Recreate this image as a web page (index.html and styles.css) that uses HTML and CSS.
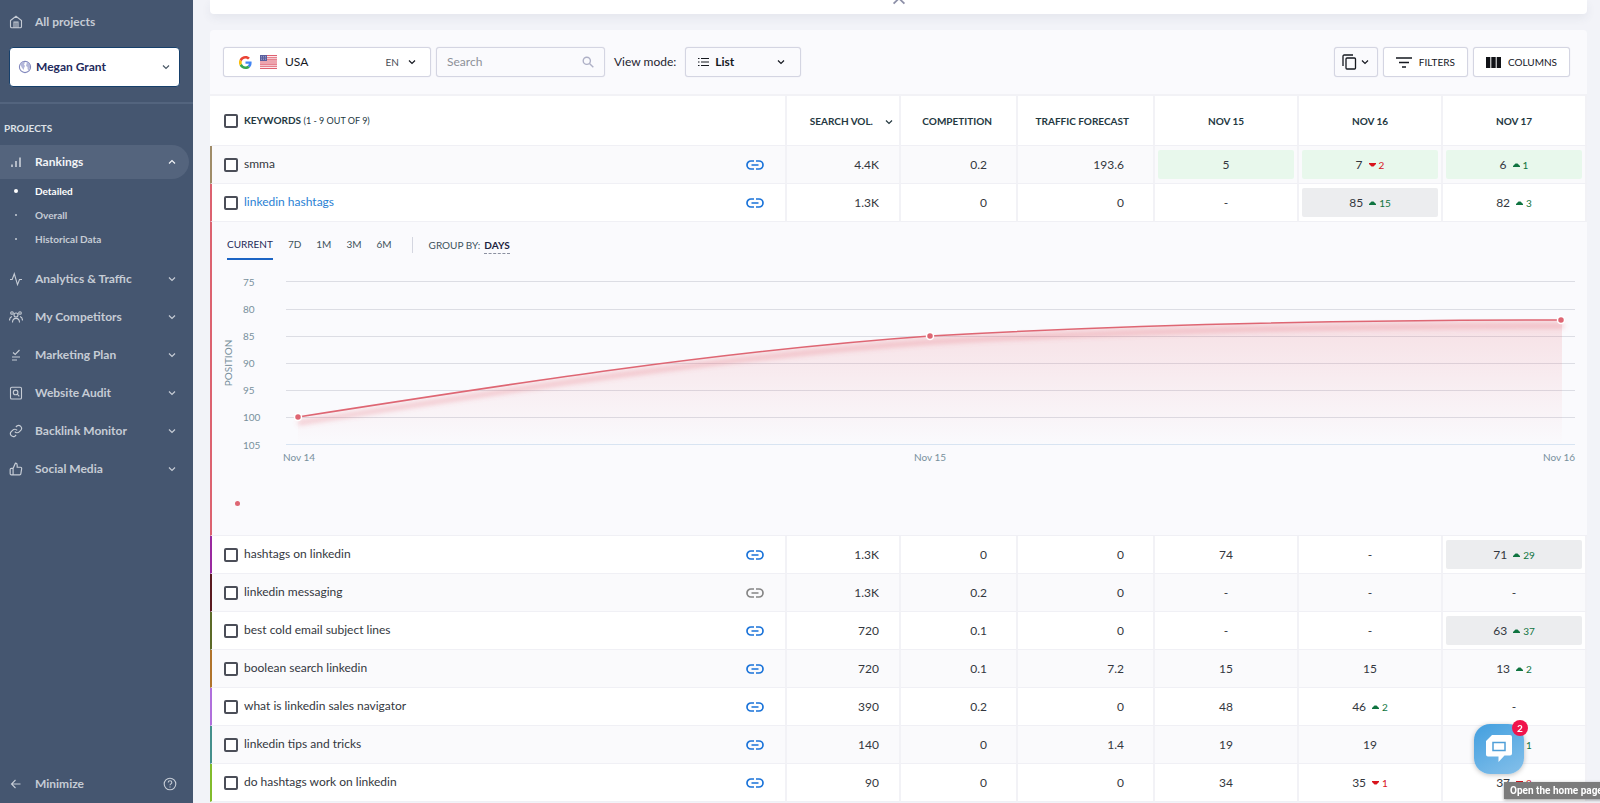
FILE: index.html
```html
<!DOCTYPE html>
<html lang="en">
<head>
    <meta charset="UTF-8">
    <meta name="viewport" content="width=device-width, initial-scale=1.0">
    <title>Rankings - Detailed</title>
    <link rel="stylesheet" href="styles.css">
</head>
<body>
    <!-- Shared icons -->
    <svg class="sprite" aria-hidden="true">
        <symbol id="chevron" viewBox="0 0 10 10"><path d="M2 3.5l3 3 3-3"/></symbol>
        <symbol id="chevron-up" viewBox="0 0 10 10"><path d="M2 6.5l3-3 3 3"/></symbol>
        <symbol id="link" viewBox="0 0 18 10"><path d="M8 1H5a4 4 0 0 0 0 8h3M10 1h3a4 4 0 0 1 0 8h-3M5.5 5h7"/></symbol>
        <symbol id="up" viewBox="0 0 7 4"><path d="M0 4V3L2.500.5h2L7 3v1z"/></symbol>
        <symbol id="down" viewBox="0 0 7 4"><path d="M0 0v1l2.500 2.500h2L7 1V0z"/></symbol>
    </svg>

    <!-- Sidebar -->
    <aside class="sidebar">
        <a href="#" class="nav-link all-projects">
            <svg class="icon" viewBox="0 0 14 14"><path d="M1.500 5.500L7 1.200l5.500 4.300v6a1.300 1.300 0 0 1-1.300 1.300H2.800a1.300 1.300 0 0 1-1.300-1.300zM5 12.500V7h4v5.500M7 7v5.500"/></svg>
            <span>All projects</span>
        </a>
        <label class="project-picker">
            <svg class="icon globe" viewBox="0 0 14 14"><circle cx="7" cy="7" r="5.600"/><path class="land" d="M2 4l3-2.500 2 1-1 2 1 1.500-1 2 0 2-2-2-1-2zM9 2l3 3v3l-1.500 2.500-1-1.500 0-2-1.500-1 .5-2z"/></svg>
            <select aria-label="Project"><option>Megan Grant</option></select>
            <svg class="chev"><use href="#chevron"/></svg>
        </label>
        <h2 class="sidebar-title">PROJECTS</h2>
        <nav>
            <a href="#" class="nav-link active">
                <svg class="icon bars" viewBox="0 0 14 14"><path d="M3 9.500V12M7 6v6M11 2.500V12"/></svg>
                <span>Rankings</span>
                <svg class="chev"><use href="#chevron-up"/></svg>
            </a>
            <ul class="sub-nav">
                <li class="current"><a href="#">Detailed</a></li>
                <li><a href="#">Overall</a></li>
                <li><a href="#">Historical Data</a></li>
            </ul>
            <a href="#" class="nav-link">
                <svg class="icon" viewBox="0 0 14 14"><path d="M1 7.500h2.200L5.300 1.800l3.200 10.800 2-5.100H13"/></svg>
                <span>Analytics &amp; Traffic</span>
                <svg class="chev"><use href="#chevron"/></svg>
            </a>
            <a href="#" class="nav-link">
                <svg class="icon" viewBox="0 0 14 14"><circle cx="7" cy="5" r="2"/><path d="M3.500 12.500c0-5.500 7-5.500 7 0M.5 10.500c0-2 .8-3.500 2.500-4M13.500 10.500c0-2-.8-3.500-2.500-4"/><circle cx="3" cy="3" r="1.300"/><circle cx="11" cy="3" r="1.300"/></svg>
                <span>My Competitors</span>
                <svg class="chev"><use href="#chevron"/></svg>
            </a>
            <a href="#" class="nav-link">
                <svg class="icon" viewBox="0 0 14 14"><path d="M4 4.500l2.200 2L10.500 2M3 9h8M3 12h5"/></svg>
                <span>Marketing Plan</span>
                <svg class="chev"><use href="#chevron"/></svg>
            </a>
            <a href="#" class="nav-link">
                <svg class="icon" viewBox="0 0 14 14"><rect x="1.500" y="1.200" width="11" height="11.800" rx="1.300"/><circle cx="6.600" cy="6.400" r="2.300"/><path d="M8.300 8.200l2 2.200"/></svg>
                <span>Website Audit</span>
                <svg class="chev"><use href="#chevron"/></svg>
            </a>
            <a href="#" class="nav-link">
                <svg class="icon" viewBox="0 0 24 24"><path class="feather" d="M10 13a5 5 0 0 0 7.500.5l3-3a5 5 0 0 0-7-7l-1.700 1.700M14 11a5 5 0 0 0-7.500-.5l-3 3a5 5 0 0 0 7 7l1.700-1.700"/></svg>
                <span>Backlink Monitor</span>
                <svg class="chev"><use href="#chevron"/></svg>
            </a>
            <a href="#" class="nav-link">
                <svg class="icon" viewBox="0 0 24 24"><path class="feather" d="M14 9V5a3 3 0 0 0-3-3l-4 9v11h11.300a2 2 0 0 0 2-1.700l1.400-9a2 2 0 0 0-2-2.300zM7 22H4a2 2 0 0 1-2-2v-7a2 2 0 0 1 2-2h3"/></svg>
                <span>Social Media</span>
                <svg class="chev"><use href="#chevron"/></svg>
            </a>
        </nav>
        <div class="sidebar-footer">
            <button type="button" class="minimize">
                <svg class="icon" viewBox="0 0 14 14"><path d="M11.500 7H2.500M6.500 3l-4 4 4 4"/></svg>
                <span>Minimize</span>
            </button>
            <a href="#" class="help" aria-label="Help">
                <svg class="icon" viewBox="0 0 14 14"><circle cx="7" cy="7" r="5.800"/><path d="M5.200 5.500c0-2.300 3.600-2.300 3.600 0 0 1.400-1.800 1.300-1.800 2.700M7 9.600v1"/></svg>
            </a>
        </div>
    </aside>

    <main class="content">
        <section class="summary-card">
            <button type="button" class="collapse" aria-label="Collapse"><svg class="chev"><use href="#chevron-up"/></svg></button>
        </section>

        <section class="panel">
            <!-- Toolbar -->
            <div class="toolbar">
                <label class="control country">
                    <svg class="google" viewBox="0 0 48 48"><path fill="#4285f4" d="M46.500 24.500c0-1.600-.1-3.100-.4-4.500H24v9h12.700c-.6 3-2.300 5.500-4.800 7.200l7.700 6c4.500-4.200 6.900-10.300 6.900-17.700z"/><path fill="#34a853" d="M24 48c6.500 0 11.900-2.100 15.900-5.800l-7.700-6c-2.200 1.400-4.900 2.300-8.200 2.300-6.300 0-11.600-4.200-13.500-9.900l-8 6.200C6.500 42.600 14.600 48 24 48z"/><path fill="#fbbc05" d="M10.500 28.600c-1-3-1-6.200 0-9.200l-8-6.200a24 24 0 0 0 0 21.600z"/><path fill="#ea4335" d="M24 9.500c3.500 0 6.700 1.200 9.200 3.600l6.900-6.900C35.900 2.400 30.500 0 24 0 14.600 0 6.500 5.400 2.500 13.200l8 6.200C12.400 13.700 17.700 9.500 24 9.500z"/></svg>
                    <svg class="flag" viewBox="0 0 17 14"><path fill="#fbe9ec" d="M0 0h17v14H0z"/><path stroke="#df6070" stroke-width="1.100" d="M0 .5h17M0 2.700h17M0 4.900h17M0 7h17M0 9.100h17M0 11.300h17M0 13.500h17"/><path fill="#5a5f9e" d="M0 0h7v6H0z"/><path stroke="#a9acd0" stroke-dasharray="1 1" stroke-width=".7" d="M1 1.500h5M1 3h5M1 4.500h5"/></svg>
                    <select aria-label="Search engine country"><option>USA</option></select>
                    <span class="lang">EN</span>
                    <svg class="chev"><use href="#chevron"/></svg>
                </label>
                <label class="control search">
                    <input type="text" placeholder="Search" aria-label="Search">
                    <svg class="magnifier" viewBox="0 0 12 12"><circle cx="4.800" cy="4.800" r="3.600"/><path d="M7.500 7.500l3.800 3.800"/></svg>
                </label>
                <label class="view-label" for="viewMode">View mode:</label>
                <div class="control view">
                    <svg class="list-icon" viewBox="0 0 11 10"><path d="M3 1.500h8M3 5h8M3 8.500h8M0 1.500h1.500M0 5h1.500M0 8.500h1.500"/></svg>
                    <select id="viewMode"><option>List</option></select>
                    <svg class="chev"><use href="#chevron"/></svg>
                </div>
                <button type="button" class="control copy" aria-label="Copy">
                    <svg class="copy-icon" viewBox="0 0 15 16"><path d="M1 12V2.200C1 1.500 1.500 1 2.200 1H11"/><rect x="4" y="4" width="9.500" height="11" rx="1"/></svg>
                    <svg class="chev"><use href="#chevron"/></svg>
                </button>
                <button type="button" class="control">
                    <svg class="filter-icon" viewBox="0 0 16 11"><path d="M0 1h16M3 5.500h10M6 10h4"/></svg>
                    FILTERS
                </button>
                <button type="button" class="control">
                    <svg class="columns-icon" viewBox="0 0 15 11"><path d="M0 0h4.300v11H0zM5.300 0h4.400v11H5.300zM10.700 0H15v11h-4.300z"/></svg>
                    COLUMNS
                </button>
            </div>

            <!-- Keyword table -->
            <table class="keywords">
                <colgroup>
                    <col>
                    <col class="col-volume">
                    <col class="col-competition">
                    <col class="col-traffic">
                    <col class="col-day">
                    <col class="col-day">
                    <col class="col-day">
                </colgroup>
                <thead>
                    <tr>
                        <th class="kw"><label class="kw-cell"><input type="checkbox"><span>KEYWORDS <span class="count">(1 - 9 OUT OF 9)</span></span></label></th>
                        <th class="volume sorted">SEARCH VOL.<svg class="chev"><use href="#chevron"/></svg></th>
                        <th>COMPETITION</th>
                        <th>TRAFFIC FORECAST</th>
                        <th class="day">NOV 15</th>
                        <th class="day">NOV 16</th>
                        <th class="day">NOV 17</th>
                    </tr>
                </thead>
                <tbody>
                    <tr class="alt">
                        <td class="kw tan"><div class="kw-cell"><input type="checkbox" id="kw1"><label for="kw1">smma</label><a href="#" aria-label="Open page"><svg class="link"><use href="#link"/></svg></a></div></td>
                        <td class="volume">4.4K</td><td>0.2</td><td>193.6</td>
                        <td class="day"><div class="pos top10">5</div></td>
                        <td class="day"><div class="pos top10">7<span class="down"><svg><use href="#down"/></svg>2</span></div></td>
                        <td class="day"><div class="pos top10">6<span class="up"><svg><use href="#up"/></svg>1</span></div></td>
                    </tr>
                    <tr>
                        <td class="kw rose"><div class="kw-cell"><input type="checkbox" id="kw2"><label for="kw2" class="selected">linkedin hashtags</label><a href="#" aria-label="Open page"><svg class="link"><use href="#link"/></svg></a></div></td>
                        <td class="volume">1.3K</td><td>0</td><td>0</td>
                        <td class="day"><div class="pos">-</div></td>
                        <td class="day"><div class="pos moved">85<span class="up"><svg><use href="#up"/></svg>15</span></div></td>
                        <td class="day"><div class="pos">82<span class="up"><svg><use href="#up"/></svg>3</span></div></td>
                    </tr>
                    <tr class="details">
                        <td class="kw rose" colspan="7">
                            <div class="tabs">
                                <button type="button" class="tab active">CURRENT</button>
                                <button type="button" class="tab">7D</button>
                                <button type="button" class="tab">1M</button>
                                <button type="button" class="tab">3M</button>
                                <button type="button" class="tab">6M</button>
                                <div class="group-by">GROUP BY: <button type="button">DAYS</button></div>
                            </div>
                            <svg class="chart" viewBox="0 0 1365 215">
                                <defs>
                                    <linearGradient id="fill" x1="0" y1="60" x2="0" y2="185" gradientUnits="userSpaceOnUse">
                                        <stop offset="0" stop-color="#e4606d" stop-opacity=".17"/>
                                        <stop offset="1" stop-color="#e4606d" stop-opacity="0"/>
                                    </linearGradient>
                                    <filter id="soft" x="-5%" y="-20%" width="110%" height="150%"><feGaussianBlur stdDeviation="2.500"/></filter>
                                </defs>
                                <g class="grid">
                                    <path d="M64 21.500h1289M64 49.500h1289M64 76.500h1289M64 103.500h1289M64 130.500h1289M64 157.500h1289"/>
                                    <path class="base" d="M64 184.500h1289"/>
                                </g>
                                <path class="area" fill="url(#fill)" d="M76 157C287 124 498 91 708 76 918 64 1129 60 1340 60V184H76z"/>
                                <path class="line-shadow" filter="url(#soft)" d="M76 163C287 130 498 97 708 82 918 70 1129 66 1342 66"/>
                                <path class="line" d="M76 157C287 124 498 91 708 76 918 64 1129 60 1340 60"/>
                                <g class="points">
                                    <circle cx="76" cy="157" r="3.500"/>
                                    <circle cx="708" cy="76" r="3.500"/>
                                    <circle cx="1339" cy="60" r="3.500"/>
                                </g>
                                <g class="labels">
                                    <text x="21" y="26">75</text>
                                    <text x="21" y="53">80</text>
                                    <text x="21" y="80">85</text>
                                    <text x="21" y="107">90</text>
                                    <text x="21" y="134">95</text>
                                    <text x="21" y="161">100</text>
                                    <text x="21" y="189">105</text>
                                    <text x="61" y="201">Nov 14</text>
                                    <text x="708" y="201" text-anchor="middle">Nov 15</text>
                                    <text x="1353" y="201" text-anchor="end">Nov 16</text>
                                    <text x="10" y="103" text-anchor="middle" transform="rotate(-90 10 103)">POSITION</text>
                                </g>
                            </svg>
                            <div class="legend"><span class="dot"></span></div>
                        </td>
                    </tr>
                    <tr>
                        <td class="kw purple"><div class="kw-cell"><input type="checkbox" id="kw3"><label for="kw3">hashtags on linkedin</label><a href="#" aria-label="Open page"><svg class="link"><use href="#link"/></svg></a></div></td>
                        <td class="volume">1.3K</td><td>0</td><td>0</td>
                        <td class="day"><div class="pos">74</div></td>
                        <td class="day"><div class="pos">-</div></td>
                        <td class="day"><div class="pos moved">71<span class="up"><svg><use href="#up"/></svg>29</span></div></td>
                    </tr>
                    <tr class="alt">
                        <td class="kw maroon"><div class="kw-cell"><input type="checkbox" id="kw4"><label for="kw4">linkedin messaging</label><a href="#" aria-label="Open page"><svg class="link muted"><use href="#link"/></svg></a></div></td>
                        <td class="volume">1.3K</td><td>0.2</td><td>0</td>
                        <td class="day"><div class="pos">-</div></td>
                        <td class="day"><div class="pos">-</div></td>
                        <td class="day"><div class="pos">-</div></td>
                    </tr>
                    <tr>
                        <td class="kw olive"><div class="kw-cell"><input type="checkbox" id="kw5"><label for="kw5">best cold email subject lines</label><a href="#" aria-label="Open page"><svg class="link"><use href="#link"/></svg></a></div></td>
                        <td class="volume">720</td><td>0.1</td><td>0</td>
                        <td class="day"><div class="pos">-</div></td>
                        <td class="day"><div class="pos">-</div></td>
                        <td class="day"><div class="pos moved">63<span class="up"><svg><use href="#up"/></svg>37</span></div></td>
                    </tr>
                    <tr class="alt">
                        <td class="kw brown"><div class="kw-cell"><input type="checkbox" id="kw6"><label for="kw6">boolean search linkedin</label><a href="#" aria-label="Open page"><svg class="link"><use href="#link"/></svg></a></div></td>
                        <td class="volume">720</td><td>0.1</td><td>7.2</td>
                        <td class="day"><div class="pos">15</div></td>
                        <td class="day"><div class="pos">15</div></td>
                        <td class="day"><div class="pos">13<span class="up"><svg><use href="#up"/></svg>2</span></div></td>
                    </tr>
                    <tr>
                        <td class="kw violet"><div class="kw-cell"><input type="checkbox" id="kw7"><label for="kw7">what is linkedin sales navigator</label><a href="#" aria-label="Open page"><svg class="link"><use href="#link"/></svg></a></div></td>
                        <td class="volume">390</td><td>0.2</td><td>0</td>
                        <td class="day"><div class="pos">48</div></td>
                        <td class="day"><div class="pos">46<span class="up"><svg><use href="#up"/></svg>2</span></div></td>
                        <td class="day"><div class="pos">-</div></td>
                    </tr>
                    <tr class="alt">
                        <td class="kw teal"><div class="kw-cell"><input type="checkbox" id="kw8"><label for="kw8">linkedin tips and tricks</label><a href="#" aria-label="Open page"><svg class="link"><use href="#link"/></svg></a></div></td>
                        <td class="volume">140</td><td>0</td><td>1.4</td>
                        <td class="day"><div class="pos">19</div></td>
                        <td class="day"><div class="pos">19</div></td>
                        <td class="day"><div class="pos">18<span class="up"><svg><use href="#up"/></svg>1</span></div></td>
                    </tr>
                    <tr>
                        <td class="kw green"><div class="kw-cell"><input type="checkbox" id="kw9"><label for="kw9">do hashtags work on linkedin</label><a href="#" aria-label="Open page"><svg class="link"><use href="#link"/></svg></a></div></td>
                        <td class="volume">90</td><td>0</td><td>0</td>
                        <td class="day"><div class="pos">34</div></td>
                        <td class="day"><div class="pos">35<span class="down"><svg><use href="#down"/></svg>1</span></div></td>
                        <td class="day"><div class="pos">37<span class="down"><svg><use href="#down"/></svg>2</span></div></td>
                    </tr>
                </tbody>
            </table>
        </section>
    </main>

    <!-- Chat launcher -->
    <button type="button" class="chat" aria-label="Open chat">
        <svg viewBox="0 0 26 28"><path fill="#fff" d="M6 0h18a2 2 0 0 1 2 2v16.500a2 2 0 0 1-2 2h-5.500L12.500 27v-5.500H2a2 2 0 0 1-2-2V6z"/><rect x="7" y="7.500" width="12" height="8" fill="none" stroke="#4f9fd8" stroke-width="1.500"/></svg>
        <span class="badge">2</span>
    </button>
    <div class="tooltip" role="tooltip">Open the home page</div>
</body>
</html>
```
FILE: styles.css
```css
* {
    box-sizing: border-box;
}
body {
    margin: 0;
    height: 100vh;
    display: flex;
    overflow: hidden;
    background: #f2f3f8;
    color: #1f2430;
    font-family: Lato, "Open Sans", sans-serif;
    font-size: 12px;
    line-height: 16px;
}
a {
    color: inherit;
    text-decoration: none;
}
button, select, input {
    font: inherit;
    color: inherit;
}
button {
    cursor: pointer;
}
select {
    appearance: none;
    border: none;
    background: transparent;
    padding: 0;
    flex: 1;
    min-width: 0;
    outline: none;
}
svg {
    display: block;
    flex: none;
    fill: none;
    stroke: currentColor;
}
.sprite {
    position: absolute;
    width: 0;
    height: 0;
}
.chev {
    width: 10px;
    height: 10px;
    stroke-width: 1.2;
    pointer-events: none;
}
.icon {
    width: 14px;
    height: 14px;
    stroke-width: 1.1;
}
.feather {
    stroke-width: 2;
}

/* Sidebar */
.sidebar {
    width: 193px;
    flex: none;
    display: flex;
    flex-direction: column;
    background: #455670;
    color: #c6ccd5;
    font-weight: bold;
}
.nav-link {
    display: flex;
    align-items: center;
    gap: 12px;
    height: 34px;
    margin: 0 4px 4px 0;
    padding: 0 12px 0 9px;
}
.nav-link span {
    flex: 1;
}
.nav-link.all-projects {
    margin: 5px 4px 8px 0;
}
.nav-link.active {
    background: #54647d;
    border-radius: 0 17px 17px 0;
    color: #f2f4f7;
    margin-bottom: 0;
}
.bars {
    opacity: 0.8;
    stroke-width: 1.5;
}
.project-picker {
    display: flex;
    align-items: center;
    gap: 4px;
    height: 40px;
    margin: 0 13px 0 9px;
    padding: 0 8px;
    background: #fff;
    border: 1px solid #17406b;
    border-radius: 4px;
    color: #232a5c;
}
.project-picker .chev {
    color: #4a5866;
}
.globe {
    color: #8288bd;
}
.land {
    fill: #b3b7da;
    stroke: none;
}
.sidebar-title {
    margin: 15px 0 0;
    padding: 16px 4px 9px;
    border-top: 2px solid #53647e;
    font-size: 10px;
    line-height: 16px;
    color: #dde1e7;
}
.sub-nav {
    list-style: none;
    margin: 0 0 11px;
    padding: 0;
    font-size: 10px;
    line-height: 24px;
}
.sub-nav li {
    display: flex;
    align-items: center;
    gap: 18px;
    padding-left: 15px;
}
.sub-nav li::before {
    content: "";
    width: 2px;
    height: 2px;
    border-radius: 2px;
    background: #c6ccd5;
}
.sub-nav .current {
    color: #fff;
    gap: 17px;
    padding-left: 14px;
}
.sub-nav .current::before {
    width: 4px;
    height: 4px;
    background: #fff;
}
.sidebar-footer {
    display: flex;
    align-items: center;
    justify-content: space-between;
    margin-top: auto;
    padding: 0 16px 11px 9px;
}
.minimize {
    display: flex;
    align-items: center;
    gap: 12px;
    padding: 0;
    border: none;
    background: none;
}

/* Main area */
.content {
    flex: 1;
    min-width: 0;
    padding: 0 13px 0 17px;
}
.summary-card {
    display: flex;
    justify-content: center;
    align-items: flex-start;
    height: 14px;
    margin-bottom: 16px;
    background: #fff;
    border-radius: 0 0 4px 4px;
    box-shadow: 0 4px 10px rgba(60, 65, 100, 0.07);
}
.collapse {
    padding: 0;
    border: none;
    background: none;
    color: #8d90a8;
    margin-top: -8px;
}
.collapse .chev {
    width: 18px;
    height: 18px;
    stroke-width: 1;
}
.panel {
    background: #fafafd;
    border-radius: 4px;
}
.toolbar {
    display: flex;
    align-items: center;
    gap: 5px;
    height: 66px;
    padding: 0 17px 0 13px;
    border-bottom: 2px solid #f2f2f6;
}
.control {
    display: flex;
    align-items: center;
    height: 30px;
    padding: 0 12px;
    background: #fff;
    border: 1px solid #d4d5e2;
    border-radius: 3px;
    box-shadow: 0 0 1px #d4d5e2;
    font-size: 10px;
    color: #15181f;
}
button.control {
    gap: 7px;
}
.country {
    width: 208px;
    padding: 0 13px 0 15px;
    gap: 8px;
}
.country select {
    font-size: 12px;
}
.google {
    width: 13px;
    height: 13px;
    stroke: none;
}
.flag {
    width: 17px;
    height: 14px;
    stroke: none;
}
.lang {
    color: #4a4d55;
}
.search {
    width: 169px;
    padding: 0 10px;
    background: #fafafd;
}
.search input {
    flex: 1;
    min-width: 0;
    padding: 0;
    border: none;
    background: transparent;
    font-size: 12px;
    outline: none;
}
.search input::placeholder {
    color: #8d9098;
}
.magnifier {
    width: 12px;
    height: 12px;
    color: #aeb0c6;
    stroke-width: 1.4;
}
.view-label {
    padding: 0 4px;
}
.view {
    width: 116px;
    gap: 6px;
    background: #fafafd;
    padding-right: 14px;
    font-size: 12px;
    font-weight: bold;
}
.list-icon {
    width: 11px;
    height: 10px;
    stroke-width: 1.2;
}
.copy {
    width: 44px;
    margin-left: auto;
    padding: 0 7px;
    background: #fafafd;
}
button.copy {
    gap: 3px;
}
.copy-icon {
    width: 15px;
    height: 16px;
    stroke-width: 1.3;
}
.filter-icon {
    width: 16px;
    height: 11px;
    stroke-width: 1.5;
}
.columns-icon {
    width: 15px;
    height: 11px;
    fill: #101216;
    stroke: none;
}

/* Keyword table */
.keywords {
    width: 100%;
    table-layout: fixed;
    border-collapse: separate;
    border-spacing: 0;
}
.col-volume {
    width: 114px;
}
.col-competition {
    width: 117px;
}
.col-traffic {
    width: 137px;
}
.col-day {
    width: 144px;
}
.keywords th, .keywords td {
    padding: 0 29px 0 0;
    background: #fff;
    border-right: 2px solid #f2f2f6;
    border-bottom: 1px solid #f0f0f5;
    text-align: right;
}
.keywords th {
    height: 50px;
    padding: 0 24px 0 0;
    font-size: 10px;
    color: #24383f;
}
.keywords td {
    height: 38px;
    font-size: 12px;
    color: #34373e;
}
.keywords .alt td {
    background: #fafafc;
}
.keywords td.volume {
    padding-right: 20px;
}
.keywords .sorted {
    padding-right: 5px;
}
.sorted .chev {
    display: inline-block;
    margin-left: 11px;
    vertical-align: middle;
}
.keywords .kw {
    padding: 0 21px 0 12px;
    border-left: 2px solid transparent;
    text-align: left;
    background-clip: padding-box;
}
.keywords th.kw {
    border-left-color: #fff;
}
.keywords .day {
    padding: 0 3px 0 3px;
    text-align: center;
}
.kw-cell {
    display: flex;
    align-items: center;
    gap: 6px;
    font-size: 12px;
}
th .kw-cell {
    font-size: 10px;
}
.kw-cell label {
    flex: 1;
    padding-bottom: 2px;
}
.kw-cell .selected {
    color: #2a7fd4;
}
.count {
    font-size: 9px;
    font-weight: normal;
}
.kw-cell input {
    appearance: none;
    width: 14px;
    height: 14px;
    margin: 0;
    border: 2px solid #4b4e58;
    border-radius: 2px;
    background: #fff;
}
.kw-cell input:checked {
    background: #2a7fd4;
}
.link {
    width: 18px;
    height: 10px;
    color: #1a73d9;
    stroke-width: 1.7;
}
.link.muted {
    color: #858585;
}
.keywords .tan { border-left-color: #a08c68; }
.keywords .rose { border-left-color: #dc6270; }
.keywords .purple { border-left-color: #9a2aa0; }
.keywords .maroon { border-left-color: #5a1a20; }
.keywords .olive { border-left-color: #5c6a28; }
.keywords .brown { border-left-color: #b0742c; }
.keywords .violet { border-left-color: #b070dc; }
.keywords .teal { border-left-color: #45908c; }
.keywords .green { border-left-color: #82bc2c; }
.pos {
    display: flex;
    align-items: center;
    justify-content: center;
    gap: 6px;
    height: 29px;
    border-radius: 2px;
}
.pos.top10 {
    background: #e8f8ec;
}
.pos.moved {
    background: #ecedef;
}
.pos span {
    display: flex;
    align-items: center;
    gap: 3px;
    font-size: 10px;
}
.pos svg {
    width: 7px;
    height: 4px;
    fill: currentColor;
    stroke: none;
}
.up {
    color: #0f7440;
}
.down {
    color: #d8141c;
}

/* Expanded row */
.keywords .details .kw {
    padding: 0 0 0 10px;
    background: #fafafd;
    border-right: none;
}
.tabs {
    display: flex;
    height: 38px;
    gap: 15px;
    padding-left: 5px;
    font-size: 10px;
    color: #40525c;
}
.tab {
    padding: 8px 0 0;
    border: none;
    border-bottom: 2px solid transparent;
    background: none;
}
.tab.active {
    color: #252a58;
    border-color: #1c64c4;
}
.group-by {
    display: flex;
    align-items: center;
    gap: 4px;
    height: 16px;
    margin: 15px 0 0 5px;
    padding-left: 16px;
    border-left: 1px solid #d4d6e0;
}
.group-by button {
    padding: 0;
    border: none;
    border-bottom: 1px dashed #8b90a0;
    background: none;
    color: #1c2340;
    font-weight: bold;
}
.chart {
    width: 100%;
}
.grid {
    stroke: #dcdde4;
}
.base {
    stroke: #d8e4f2;
}
.area {
    stroke: none;
}
.line {
    stroke: #de6673;
    stroke-width: 1.6;
}
.line-shadow {
    stroke: #e4606d;
    stroke-opacity: 0.35;
    stroke-width: 4;
}
.points {
    fill: #de6673;
    stroke: #fff;
    stroke-width: 1.5;
}
.labels {
    fill: #78909c;
    stroke: none;
    font-size: 10px;
}
.legend {
    height: 60px;
    padding: 26px 0 0 13px;
}
.dot {
    display: block;
    width: 5px;
    height: 5px;
    border-radius: 3px;
    background: #de6673;
}

/* Floating elements */
.chat {
    position: fixed;
    right: 76px;
    bottom: 29px;
    width: 50px;
    height: 50px;
    padding: 0;
    display: flex;
    align-items: center;
    justify-content: center;
    border: none;
    border-radius: 16px;
    background: linear-gradient(150deg, #429fdf, #85c0ea);
    box-shadow: 0 1px 5px rgba(0, 0, 0, 0.25);
}
.chat svg {
    width: 26px;
    height: 28px;
    stroke: none;
}
.badge {
    position: absolute;
    top: -4px;
    right: -4px;
    width: 16px;
    height: 16px;
    border-radius: 8px;
    background: #f0144c;
    color: #fff;
    font-size: 10px;
    font-weight: bold;
}
.tooltip {
    position: fixed;
    left: calc(100% - 96px);
    bottom: 4px;
    padding: 0 6px;
    background: #7b7b7b;
    box-shadow: 0 1px 3px rgba(0, 0, 0, 0.4);
    color: #fff;
    font-family: Roboto, Arial, sans-serif;
    font-size: 10px;
    font-weight: bold;
    line-height: 17px;
    white-space: nowrap;
}
```
